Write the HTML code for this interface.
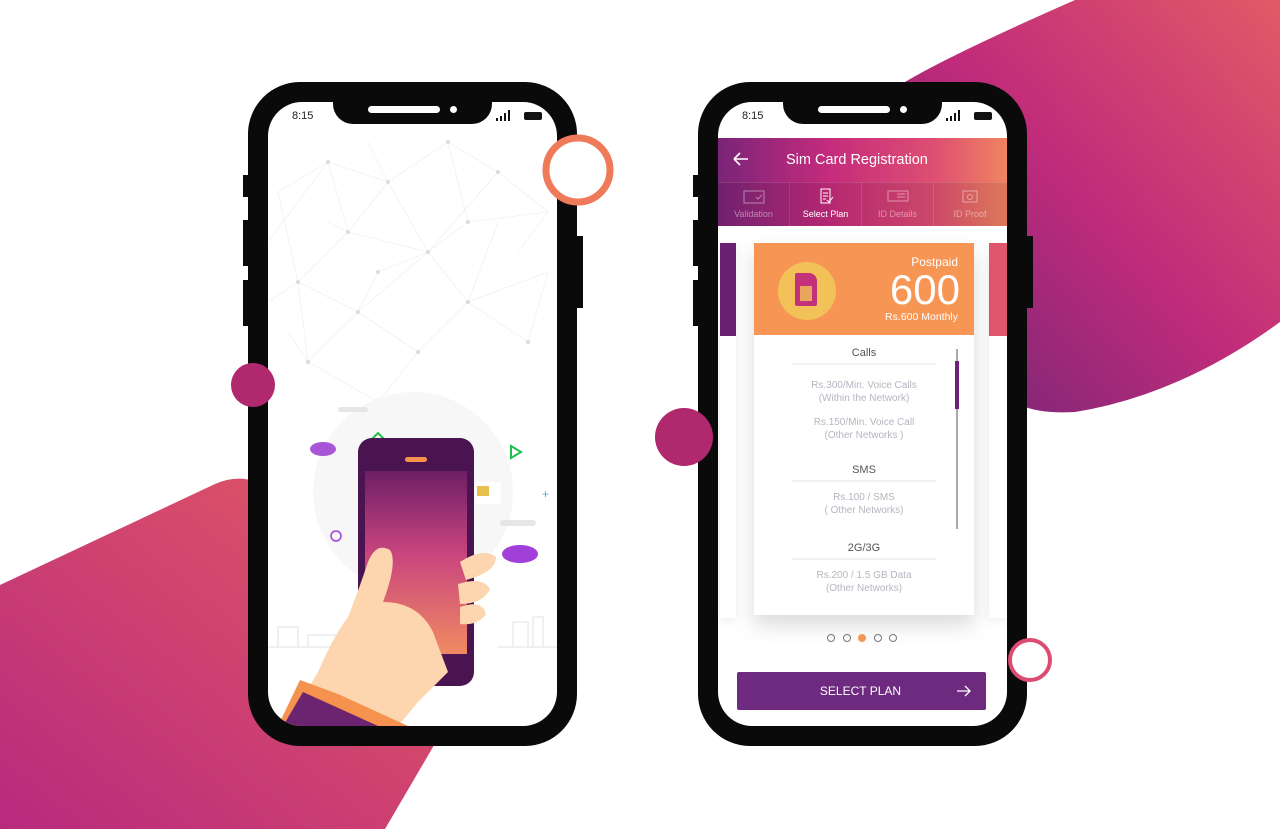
<!DOCTYPE html>
<html><head><meta charset="utf-8"><style>
*{margin:0;padding:0;box-sizing:border-box}
body{width:1280px;height:829px;overflow:hidden;background:#fff;position:relative;font-family:"Liberation Sans",sans-serif}
.abs{position:absolute}
.phone{position:absolute;top:82px;width:329px;height:664px;background:#0a0a0a;border-radius:52px}
.screen{position:absolute;left:20px;top:20px;width:289px;height:624px;background:#fff;border-radius:34px;overflow:hidden}
.notch{position:absolute;left:65px;top:0;width:159px;height:22px;background:#0a0a0a;border-radius:0 0 20px 20px}
.notch:before{content:"";position:absolute;left:35px;top:4px;width:72px;height:7px;border-radius:4px;background:#fff}
.notch:after{content:"";position:absolute;left:117px;top:4px;width:7px;height:7px;border-radius:50%;background:#fff}
.time{position:absolute;left:24px;top:8px;font-size:11px;color:#222}
.btn{position:absolute;width:6px;background:#0a0a0a}
.tab{position:absolute;top:0;height:44px;width:72px;text-align:center;font-size:9px;color:rgba(255,255,255,.45);border-right:1px solid rgba(255,255,255,.12)}
.tab span{position:absolute;left:0;right:0;top:27px}
.sec{font-size:11px;color:#555;text-align:center}
.line{height:2px;background:#f0f0f5;margin:4px 38px 0}
.txt{font-size:10px;color:#b5b5c0;text-align:center;line-height:13px}
.dot{position:absolute;top:634px;width:8px;height:8px;border:1px solid #777;border-radius:50%}
</style></head><body>
<svg class="abs" style="left:0;top:0" width="1280" height="829">
<defs>
<linearGradient id="g1" x1="0" y1="1" x2="1" y2="0"><stop offset="0" stop-color="#b82a7e"/><stop offset="1" stop-color="#e45a62"/></linearGradient>
<linearGradient id="g2" x1="0" y1="1" x2="1" y2="0"><stop offset="0" stop-color="#6d2576"/><stop offset=".5" stop-color="#c02b7b"/><stop offset="1" stop-color="#e25a66"/></linearGradient>
</defs>
<path d="M0,585 L215,484 Q252,468 280,500 L440,735 L385,829 L0,829 Z" fill="url(#g1)"/>
<path d="M905,82 Q950,55 1075,0 L1280,0 L1280,322 Q1180,395 1075,412 Q1040,414 1020,405 L1020,140 Z" fill="url(#g2)"/>
</svg>

<!-- LEFT PHONE -->
<div class="btn" style="left:243px;top:175px;height:22px"></div>
<div class="btn" style="left:243px;top:220px;height:46px"></div>
<div class="btn" style="left:243px;top:280px;height:46px"></div>
<div class="btn" style="left:577px;top:236px;height:72px"></div>
<div class="phone" style="left:248px">
<div class="screen">
<svg class="abs" style="left:0;top:0" width="289" height="624">
<g stroke="#ececec" stroke-width=".6" fill="none">
<path d="M10,90 L60,60 L120,80 L180,40 L230,70 L280,110 M60,60 L80,130 L120,80 L160,150 L230,70 M80,130 L30,180 L10,90 M80,130 L160,150 L200,200 L280,170 M30,180 L90,210 L160,150 M90,210 L40,260 L30,180 M200,200 L260,240 L280,170 M90,210 L150,250 L200,200 M40,260 L110,300 L150,250 M20,230 L40,260 M180,40 L200,120 L160,150 M200,120 L280,110 M0,140 L60,60 M0,200 L30,180 M100,40 L120,80 M250,150 L280,110 M110,170 L160,150 M110,170 L90,210 M230,120 L200,200 M60,120 L80,130"/>
</g>
<g fill="#dcdcdc"><circle cx="60" cy="60" r="2"/><circle cx="120" cy="80" r="2"/><circle cx="180" cy="40" r="2"/><circle cx="230" cy="70" r="2"/><circle cx="80" cy="130" r="2"/><circle cx="160" cy="150" r="2"/><circle cx="30" cy="180" r="2"/><circle cx="90" cy="210" r="2"/><circle cx="200" cy="200" r="2"/><circle cx="150" cy="250" r="2"/><circle cx="40" cy="260" r="2"/><circle cx="260" cy="240" r="2"/><circle cx="200" cy="120" r="2"/><circle cx="110" cy="170" r="2"/></g>
<circle cx="145" cy="390" r="100" fill="#f7f7f7"/>
<g stroke="#e2e2e2" fill="none" stroke-width="1"><path d="M0,545 h90 M230,545 h59 M10,545 v-20 h20 v20 M245,545 v-25 h15 v25 M265,545 v-30 h10 v30 M40,545 v-12 h30 v12"/></g>
<rect x="70" y="305" width="30" height="5" rx="2.5" fill="#e6e6e6"/>
<rect x="232" y="418" width="36" height="6" rx="3" fill="#e6e6e6"/>
<ellipse cx="55" cy="347" rx="13" ry="7" fill="#a855d8"/>
<ellipse cx="252" cy="452" rx="18" ry="9" fill="#a040d8"/>
<path d="M104,337 l6,-6 6,6 -6,6z" fill="none" stroke="#1fbf4f" stroke-width="2"/>
<path d="M243,344 l10,6 -10,6z" fill="none" stroke="#1fbf4f" stroke-width="2"/>
<circle cx="68" cy="434" r="5" fill="none" stroke="#a040d8" stroke-width="1.5"/>
<text x="274" y="396" font-size="12" fill="#44b0e8">+</text>
<rect x="90" y="336" width="116" height="248" rx="14" fill="#4a1450"/>
<defs><linearGradient id="sc" x1="0" y1="0" x2="0" y2="1"><stop offset="0" stop-color="#6d1e66"/><stop offset=".45" stop-color="#c9457e"/><stop offset="1" stop-color="#f08a62"/></linearGradient></defs>
<rect x="97" y="369" width="102" height="183" fill="url(#sc)"/>
<rect x="137" y="355" width="22" height="5" rx="2.5" fill="#f4924e"/>
<rect x="136" y="563" width="26" height="7" rx="3.5" fill="#f4924e"/>
<rect x="207" y="380" width="26" height="22" rx="3" fill="#fff"/><rect x="209" y="384" width="12" height="10" fill="#e8c050"/>
<path d="M18,624 L50,570 Q65,535 80,515 Q90,490 100,460 Q108,440 122,448 Q130,460 115,500 Q150,500 165,530 L180,570 L150,600 L130,624 Z" fill="#fdd5ae"/>
<path d="M192,460 Q215,445 228,455 Q228,470 198,478z M190,482 Q215,474 222,487 Q215,502 192,502z M192,505 Q214,497 218,512 Q210,524 192,522z" fill="#fdd5ae"/>
<path d="M10,624 L32,578 L70,592 L140,624Z" fill="#f4924e"/>
<path d="M15,624 L35,590 L110,624Z" fill="#6d2470"/>
</svg>
<div class="time">8:15</div>
<div class="notch"></div>
<svg class="abs" style="left:228px;top:8px" width="50" height="12"><rect x="0" y="8" width="2" height="3" fill="#111"/><rect x="4" y="6" width="2" height="5" fill="#111"/><rect x="8" y="3" width="2" height="8" fill="#111"/><rect x="12" y="0" width="2" height="11" fill="#111"/><rect x="28" y="2" width="18" height="8" rx="2" fill="#111"/></svg>
</div></div>

<!-- RIGHT PHONE -->
<div class="btn" style="left:693px;top:175px;height:22px"></div>
<div class="btn" style="left:693px;top:220px;height:46px"></div>
<div class="btn" style="left:693px;top:280px;height:46px"></div>
<div class="btn" style="left:1027px;top:236px;height:72px"></div>
<div class="phone" style="left:698px">
<div class="screen">
<div class="time">8:15</div>
<div class="notch"></div>
<svg class="abs" style="left:228px;top:8px" width="50" height="12"><rect x="0" y="8" width="2" height="3" fill="#111"/><rect x="4" y="6" width="2" height="5" fill="#111"/><rect x="8" y="3" width="2" height="8" fill="#111"/><rect x="12" y="0" width="2" height="11" fill="#111"/><rect x="28" y="2" width="18" height="8" rx="2" fill="#111"/></svg>
<div class="abs" style="left:0;top:36px;width:289px;height:88px;background:linear-gradient(90deg,#7a2478 0%,#c42b7c 38%,#de4f72 75%,#f08460 100%)"></div>
<div class="abs" style="left:0;top:80px;width:289px;height:44px;background:rgba(0,0,0,.08);border-top:1px solid rgba(255,255,255,.12)"></div>
<svg class="abs" style="left:14px;top:50px" width="18" height="14"><path d="M2,7 H16 M2,7 L8,1 M2,7 L8,13" stroke="#fff" stroke-width="1.6" fill="none"/></svg>
<div class="abs" style="left:68px;top:50px;color:#fff;font-size:14.5px">Sim Card Registration</div>
<div class="abs" style="left:0;top:80px;width:289px;height:44px">
<div class="tab" style="left:0"><svg class="abs" style="left:25px;top:8px" width="22" height="14"><rect x="1" y="1" width="20" height="12" fill="none" stroke="rgba(255,255,255,.45)"/><path d="M13,7 l2,2 4,-4" stroke="rgba(255,255,255,.45)" fill="none"/></svg><span>Validation</span></div>
<div class="tab" style="left:72px;color:#fff"><svg class="abs" style="left:30px;top:6px" width="14" height="16"><path d="M1,1h9v14h-9z M3,5h5 M3,8h5 M3,11h3 M7,12l2,2 4,-5" stroke="#fff" fill="none"/></svg><span>Select Plan</span></div>
<div class="tab" style="left:144px"><svg class="abs" style="left:25px;top:8px" width="22" height="12"><rect x="1" y="1" width="20" height="10" fill="none" stroke="rgba(255,255,255,.45)"/><path d="M10,4h8 M10,7h8" stroke="rgba(255,255,255,.45)"/></svg><span>ID Details</span></div>
<div class="tab" style="left:216px;border:none"><svg class="abs" style="left:28px;top:7px" width="16" height="14"><rect x="1" y="2" width="14" height="11" fill="none" stroke="rgba(255,255,255,.45)"/><circle cx="8" cy="8" r="2.5" fill="none" stroke="rgba(255,255,255,.45)"/></svg><span>ID Proof</span></div>
</div>
<div class="abs" style="left:2px;top:141px;width:16px;height:375px;background:#fff;box-shadow:0 2px 10px rgba(0,0,0,.08)"><div style="height:93px;background:#6a2070"></div></div>
<div class="abs" style="left:271px;top:141px;width:18px;height:375px;background:#fff;box-shadow:0 2px 10px rgba(0,0,0,.08)"><div style="height:93px;background:#e0566c"></div></div>
<div class="abs" style="left:36px;top:141px;width:220px;height:372px;background:#fff;box-shadow:0 10px 20px rgba(0,0,0,.15)">
<div style="height:92px;background:#f79555;position:relative">
<div class="abs" style="left:24px;top:19px;width:58px;height:58px;border-radius:50%;background:#f2c258"></div>
<div class="abs" style="left:41px;top:30px;width:22px;height:33px;background:#c4317a;border-radius:2px 8px 2px 2px"></div>
<div class="abs" style="left:46px;top:43px;width:12px;height:15px;background:#f2c258;opacity:.8"></div>
<div class="abs" style="right:16px;top:12px;color:#fff;font-size:12px">Postpaid</div>
<div class="abs" style="right:14px;top:24px;color:#fff;font-size:42px;line-height:46px">600</div>
<div class="abs" style="right:16px;top:68px;color:#fff;font-size:10.5px">Rs.600 Monthly</div>
</div>
<div class="abs" style="left:202px;top:106px;width:2px;height:180px;background:#aaa"></div>
<div class="abs" style="left:201px;top:118px;width:4px;height:48px;background:#6e2178"></div>
<div style="padding-top:12px">
<div class="sec">Calls</div><div class="line"></div>
<div class="txt" style="margin-top:14px">Rs.300/Min. Voice Calls<br>(Within the Network)</div>
<div class="txt" style="margin-top:11px">Rs.150/Min. Voice Call<br>(Other Networks )</div>
<div class="sec" style="margin-top:22px">SMS</div><div class="line"></div>
<div class="txt" style="margin-top:9px">Rs.100 / SMS<br>( Other Networks)</div>
<div class="sec" style="margin-top:25px">2G/3G</div><div class="line"></div>
<div class="txt" style="margin-top:9px">Rs.200 / 1.5 GB Data<br>(Other Networks)</div>
</div></div>
<div class="dot" style="left:109px;top:532px"></div><div class="dot" style="left:125px;top:532px"></div>
<div class="dot" style="left:140px;top:532px;background:#f79555;border-color:#f79555"></div>
<div class="dot" style="left:156px;top:532px"></div><div class="dot" style="left:171px;top:532px"></div>
<div class="abs" style="left:19px;top:570px;width:249px;height:38px;background:#6e2a7f;border-radius:2px;color:#fff;font-size:12px;line-height:38px;text-align:center;padding-right:2px">SELECT PLAN
<svg class="abs" style="right:14px;top:13px" width="16" height="12"><path d="M1,6 H14 M9,1 L14,6 L9,11" stroke="#fff" stroke-width="1.3" fill="none"/></svg></div>
</div></div>
<svg class="abs" style="left:0;top:0;pointer-events:none" width="1280" height="829">
<circle cx="578" cy="170" r="32" fill="#fff" stroke="#ee7a5a" stroke-width="7"/>
<circle cx="253" cy="385" r="22" fill="#b0286e"/>
<circle cx="684" cy="437" r="29" fill="#b0286e"/>
<circle cx="1030" cy="660" r="20" fill="#fff" stroke="#dd4a72" stroke-width="4"/>
</svg>
</body></html>
